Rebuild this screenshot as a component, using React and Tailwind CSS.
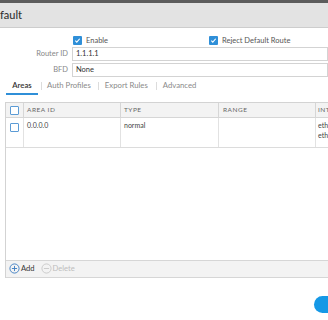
import React from 'react';

const Check = ({ checked }) =>
    checked ? (
        <span className="w-[9px] h-[9px] bg-[#2f8fd8] rounded-[1px] flex items-center justify-center shrink-0">
            <svg width="7" height="7" viewBox="0 0 8 8">
                <path d="M1.5 4.2 L3.2 5.8 L6.5 2" stroke="#fff" strokeWidth="1.3" fill="none" />
            </svg>
        </span>
    ) : (
        <span className="w-[9px] h-[9px] border border-[#5b9bd5] bg-white rounded-[1px] shrink-0" />
    );

const App = () => {
    return (
        <div className="w-[328px] h-[320px] overflow-hidden bg-white relative font-['Lato','Liberation_Sans',sans-serif] text-[#333]">
            <div className="h-[3px] bg-[#5c5c5c]" />
            <div className="h-[25px] bg-[#e3e3e3] border-b border-[#cdcdcd] flex items-center text-[11px] font-medium text-[#333] whitespace-nowrap">
                fault
            </div>

            {/* General form */}
            <div className="pt-[8px] text-[7.5px]">
                <div className="h-[9px] flex items-center">
                    <div className="w-[73px] shrink-0" />
                    <div className="w-[136px] flex items-center gap-[4px] shrink-0">
                        <Check checked />
                        <span className="text-[#555]">Enable</span>
                    </div>
                    <div className="flex items-center gap-[4px] whitespace-nowrap">
                        <Check checked />
                        <span className="text-[#555]">Reject Default Route</span>
                    </div>
                </div>
                <div className="mt-[2px] h-[14px] flex items-stretch">
                    <div className="w-[68px] shrink-0 text-right text-[#888] flex items-center justify-end">Router ID</div>
                    <div className="ml-[4px] w-[300px] border border-[#d3d3d3] flex items-center pl-[3px] text-[#333]">1.1.1.1</div>
                </div>
                <div className="mt-[2px] h-[14px] flex items-stretch">
                    <div className="w-[68px] shrink-0 text-right text-[#888] flex items-center justify-end">BFD</div>
                    <div className="ml-[4px] w-[300px] border border-[#d3d3d3] flex items-center pl-[3px] text-[#333]">None</div>
                </div>
            </div>

            {/* Tabs */}
            <div className="mt-[2px] h-[16px] flex items-stretch text-[7.75px] whitespace-nowrap">
                <div className="ml-[6px] w-[32px] border-b-2 border-[#2f8fd8] flex items-center justify-center font-semibold text-[#333]">
                    Areas
                </div>
                <div className="flex items-center pb-[2px] text-[#8a8a8a]">
                    <span className="ml-[3px] w-px h-[8px] bg-[#dcdcdc]" />
                    <span className="ml-[5px]">Auth Profiles</span>
                    <span className="ml-[7px] w-px h-[8px] bg-[#dcdcdc]" />
                    <span className="ml-[6px]">Export Rules</span>
                    <span className="ml-[8px] w-px h-[8px] bg-[#dcdcdc]" />
                    <span className="ml-[6px]">Advanced</span>
                </div>
            </div>

            {/* Areas table */}
            <div className="mt-[7px] ml-[5px] w-[420px] h-[176px] border-l border-t border-[#d3d3d3] flex flex-col">
                <div className="h-[15px] bg-[#f3f3f3] border-b border-[#d6d6d6] flex text-[6.5px] tracking-[0.5px] text-[#666] whitespace-nowrap">
                    <div className="w-[18px] border-r border-[#d6d6d6] flex items-center justify-center">
                        <Check />
                    </div>
                    <div className="w-[97px] border-r border-[#d6d6d6] flex items-center pl-[3px]">AREA ID</div>
                    <div className="w-[98px] border-r border-[#d6d6d6] flex items-center pl-[3px]">TYPE</div>
                    <div className="w-[97px] border-r border-[#d6d6d6] flex items-center pl-[4px]">RANGE</div>
                    <div className="flex-1 flex items-center pl-[2px]">INTERFACE</div>
                </div>
                <div className="h-[30px] border-b border-[#dcdcdc] flex text-[7px] text-[#444] whitespace-nowrap">
                    <div className="w-[18px] border-r border-[#e2e2e2] flex justify-center pt-[5px]">
                        <Check />
                    </div>
                    <div className="w-[97px] border-r border-[#e2e2e2] pl-[3px] pt-[2px] leading-[10px]">0.0.0.0</div>
                    <div className="w-[98px] border-r border-[#e2e2e2] pl-[3px] pt-[2px] leading-[10px]">normal</div>
                    <div className="w-[97px] border-r border-[#e2e2e2]" />
                    <div className="flex-1 pl-[2px] pt-[2px] leading-[10px]">
                        <div>ethernet1/1</div>
                        <div>ethernet1/2</div>
                    </div>
                </div>
                <div className="flex-1" />
                <div className="h-[18px] bg-[#f3f3f3] border-t border-b border-[#d6d6d6] flex items-center text-[7.6px] whitespace-nowrap">
                    <span className="ml-[3px] flex items-center text-[#333]">
                        <svg width="11" height="11" viewBox="0 0 12 12" className="mr-[1px]">
                            <circle cx="6" cy="6" r="5" fill="none" stroke="#3c7dc2" strokeWidth="1" />
                            <path d="M6 3.2 V8.8 M3.2 6 H8.8" stroke="#3c7dc2" strokeWidth="1" />
                        </svg>
                        Add
                    </span>
                    <span className="ml-[6px] flex items-center text-[#bdbdbd]">
                        <svg width="11" height="11" viewBox="0 0 12 12" className="mr-[1px]">
                            <circle cx="6" cy="6" r="5" fill="none" stroke="#c8c8c8" strokeWidth="1" />
                            <path d="M3.2 6 H8.8" stroke="#c8c8c8" strokeWidth="1" />
                        </svg>
                        Delete
                    </span>
                </div>
            </div>

            {/* Dialog buttons */}
            <div className="mt-[18px] ml-[314px] w-[44px] h-[17px] rounded-full bg-[#1598e6] flex items-center pl-[14px] text-[8px] text-white">
                OK
            </div>
        </div>
    );
};

export default App;
